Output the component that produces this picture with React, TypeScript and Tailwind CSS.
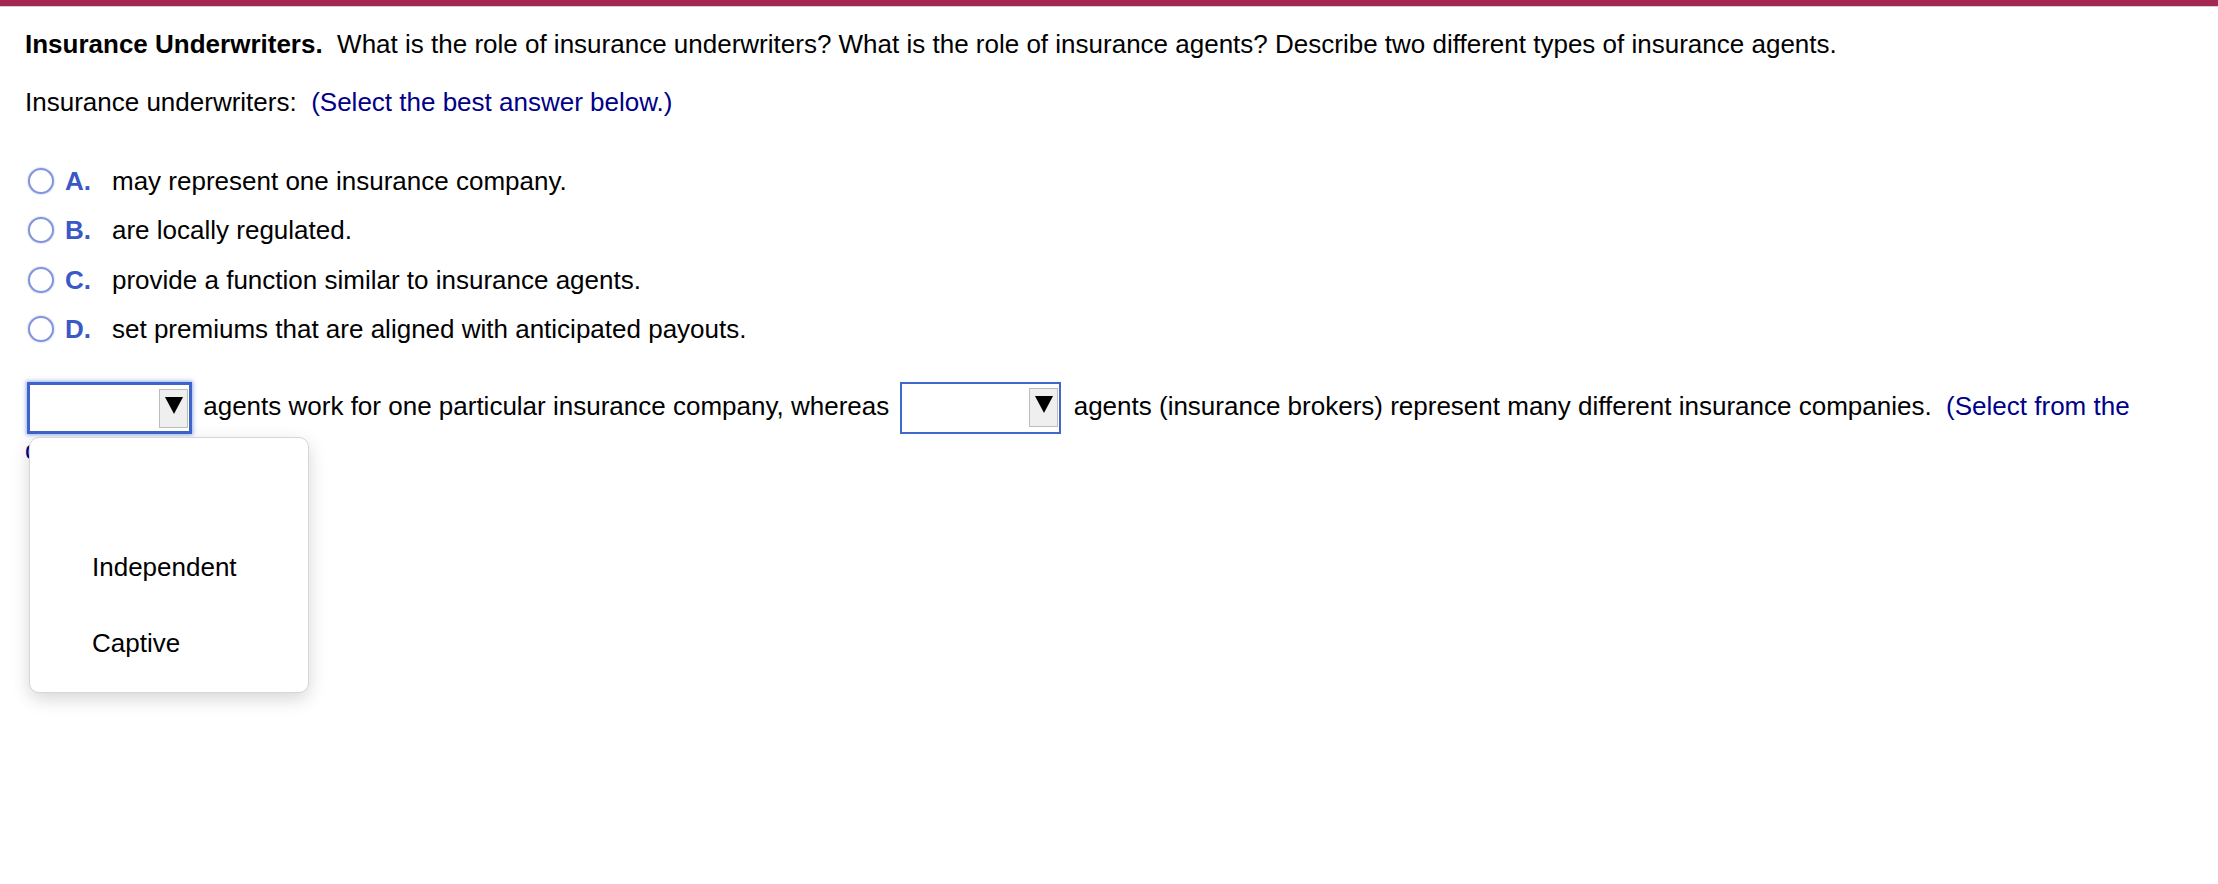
import React from "react";

const OPTIONS = [
  { key: "A.", text: "may represent one insurance company." },
  { key: "B.", text: "are locally regulated." },
  { key: "C.", text: "provide a function similar to insurance agents." },
  { key: "D.", text: "set premiums that are aligned with anticipated payouts." },
];

function Arrow() {
  return (
    <svg width="18" height="17" viewBox="0 0 18 17">
      <polygon points="0,0 18,0 9,17" fill="#000" />
    </svg>
  );
}

function Dropdown({ focused }: { focused?: boolean }) {
  return (
    <span
      className={`relative inline-block align-middle h-[52px] -my-[6px] bg-white ${
        focused
          ? "w-[165px] border-[3px] border-[#3c64c9] shadow-[0_0_4px_1px_rgba(70,110,220,0.55)]"
          : "w-[161px] border-2 border-[#3f68c9]"
      }`}
    >
      <span className="absolute right-[1px] top-[4px] w-[29px] h-[39px] bg-[#efefef] border border-[#bdbdbd] flex items-start justify-center pt-[7px]">
        <Arrow />
      </span>
    </span>
  );
}

export default function App() {
  return (
    <div className="relative min-h-[884px] bg-white text-black text-[26px] font-['Liberation_Sans',Arial,sans-serif]">
      <div className="h-[6px] bg-[#a4284f]" />
      <div className="h-[1px] bg-[#d4cfd6]" />

      <div className="pl-[25px] pr-[40px]">
        <p className="mt-[22px] leading-[30px] whitespace-nowrap">
          <span className="font-bold">Insurance Underwriters.</span>
          {"\u00a0 "}What is the role of insurance underwriters? What is the role of insurance agents? Describe two different types of insurance agents.
        </p>

        <p className="mt-[28px] leading-[30px]">
          Insurance underwriters:{"\u00a0 "}
          <span className="text-[#000088]">(Select the best answer below.)</span>
        </p>

        <div className="mt-[39px]">
          {OPTIONS.map((o) => (
            <div key={o.key} className="h-[49.5px] leading-[30px] flex items-center">
              <span className="ml-[3px] w-[26px] h-[26px] rounded-full border-[2.5px] border-[#8194dc] shadow-[0_0_1.5px_rgba(110,130,215,0.9)]" />
              <span className="ml-[11px] w-[47px] font-bold text-[#3a58c6]">{o.key}</span>
              <span>{o.text}</span>
            </div>
          ))}
        </div>

        <p className="mt-[30px] leading-[44px]">
          <span className="ml-[2px] mr-[4px]">
            <Dropdown focused />
          </span>{" "}
          agents work for one particular insurance company, whereas{" "}
          <span className="ml-[4px] mr-[5px]">
            <Dropdown />
          </span>{" "}
          agents (insurance brokers) represent many different insurance companies.{"\u00a0 "}
          <span className="text-[#000088]">(Select from the drop-down menus.)</span>
        </p>
      </div>

      {/* open list of the first drop-down */}
      <div className="absolute left-[29px] top-[437px] w-[280px] h-[256px] bg-white rounded-[10px] border border-[#d6d6d6] shadow-[0_6px_18px_rgba(0,0,0,0.16)] pt-[15px]">
        <div className="h-[76px]" />
        <div className="h-[76px] pl-[62px] flex items-center">Independent</div>
        <div className="h-[76px] pl-[62px] flex items-center">Captive</div>
      </div>
    </div>
  );
}
